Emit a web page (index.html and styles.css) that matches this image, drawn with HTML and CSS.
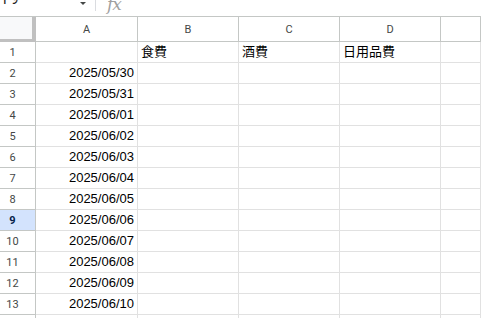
FILE: index.html
```html
<!DOCTYPE html>
<html lang="ja">
<head>
<meta charset="utf-8">
<link rel="stylesheet" href="styles.css">
</head>
<body>
<div class="formula-bar">
  <span class="namebox">F9</span>
  <span class="caret"></span>
  <span class="divider"></span>
  <span class="fx">fx</span>
</div>
<div class="sheet">
  <div class="corner"></div>
  <div class="colhead">A</div>
  <div class="colhead">B</div>
  <div class="colhead">C</div>
  <div class="colhead">D</div>
  <div class="colhead"></div>

  <div class="rowhead">1</div><div class="cell"></div><div class="cell">食費</div><div class="cell">酒費</div><div class="cell">日用品費</div><div class="cell"></div>
  <div class="rowhead">2</div><div class="cell date">2025/05/30</div><div class="cell"></div><div class="cell"></div><div class="cell"></div><div class="cell"></div>
  <div class="rowhead">3</div><div class="cell date">2025/05/31</div><div class="cell"></div><div class="cell"></div><div class="cell"></div><div class="cell"></div>
  <div class="rowhead">4</div><div class="cell date">2025/06/01</div><div class="cell"></div><div class="cell"></div><div class="cell"></div><div class="cell"></div>
  <div class="rowhead">5</div><div class="cell date">2025/06/02</div><div class="cell"></div><div class="cell"></div><div class="cell"></div><div class="cell"></div>
  <div class="rowhead">6</div><div class="cell date">2025/06/03</div><div class="cell"></div><div class="cell"></div><div class="cell"></div><div class="cell"></div>
  <div class="rowhead">7</div><div class="cell date">2025/06/04</div><div class="cell"></div><div class="cell"></div><div class="cell"></div><div class="cell"></div>
  <div class="rowhead">8</div><div class="cell date">2025/06/05</div><div class="cell"></div><div class="cell"></div><div class="cell"></div><div class="cell"></div>
  <div class="rowhead selected">9</div><div class="cell date">2025/06/06</div><div class="cell"></div><div class="cell"></div><div class="cell"></div><div class="cell"></div>
  <div class="rowhead">10</div><div class="cell date">2025/06/07</div><div class="cell"></div><div class="cell"></div><div class="cell"></div><div class="cell"></div>
  <div class="rowhead">11</div><div class="cell date">2025/06/08</div><div class="cell"></div><div class="cell"></div><div class="cell"></div><div class="cell"></div>
  <div class="rowhead">12</div><div class="cell date">2025/06/09</div><div class="cell"></div><div class="cell"></div><div class="cell"></div><div class="cell"></div>
  <div class="rowhead">13</div><div class="cell date">2025/06/10</div><div class="cell"></div><div class="cell"></div><div class="cell"></div><div class="cell"></div>
  <div class="rowhead"></div><div class="cell"></div><div class="cell"></div><div class="cell"></div><div class="cell"></div><div class="cell"></div>
</div>
</body>
</html>
```
FILE: styles.css
```css
html, body {
  margin: 0;
  padding: 0;
  background: #ffffff;
  overflow: hidden;
}
body {
  width: 481px;
  height: 318px;
  font-family: "Liberation Sans", Arial, "Noto Sans CJK JP", sans-serif;
}
.formula-bar {
  height: 16px;
  border-bottom: 1px solid #c4c7c5;
  display: flex;
  align-items: flex-start;
  overflow: hidden;
  box-sizing: content-box;
}
.namebox {
  font-family: Roboto, "Liberation Sans", sans-serif;
  font-size: 14px;
  line-height: 16px;
  color: #1f1f1f;
  margin-top: -9px;
  margin-left: 3px;
  width: 77px;
}
.caret {
  width: 0;
  height: 0;
  margin-top: 2px;
  border-left: 3px solid transparent;
  border-right: 3px solid transparent;
  border-top: 3px solid #444746;
}
.divider {
  width: 1px;
  height: 11px;
  background: #dadce0;
  margin-left: 9px;
}
.fx {
  font-family: "DejaVu Serif", serif;
  font-style: italic;
  font-size: 17px;
  line-height: 16px;
  color: #a0a0a0;
  margin-left: 11px;
  margin-top: -4px;
  letter-spacing: -1px;
}
.sheet {
  display: grid;
  grid-template-columns: 36px 102px 101px 101px 101px 1fr;
  grid-template-rows: 25px repeat(14, 21px);
}
.sheet > div {
  box-sizing: border-box;
  overflow: hidden;
  white-space: nowrap;
}
.corner {
  background: #f8f9fa;
  border-right: 4px solid #c0c0c0;
  border-bottom: 3px solid #c0c0c0;
}
.colhead {
  border-right: 1px solid #c4c7c5;
  border-bottom: 1px solid #c4c7c5;
  font-family: Roboto, "Liberation Sans", sans-serif;
  font-size: 11px;
  color: #444746;
  display: flex;
  align-items: center;
  justify-content: center;
  padding-top: 1px;
}
.rowhead {
  border-right: 1px solid #c4c7c5;
  border-bottom: 1px solid #c4c7c5;
  font-family: Roboto, "Liberation Sans", sans-serif;
  font-size: 11px;
  color: #444746;
  display: flex;
  align-items: center;
  justify-content: center;
  padding-right: 10px;
}
.rowhead.selected {
  background: #d3e3fd;
  color: #041e49;
  font-weight: bold;
}
.cell {
  border-right: 1px solid #e1e1e1;
  border-bottom: 1px solid #e1e1e1;
  font-size: 13px;
  line-height: 20px;
  color: #000000;
  padding: 0 3px;
  font-family: "Liberation Sans", Arial, "Noto Sans CJK JP", sans-serif;
}
.cell.date {
  text-align: right;
}
```
